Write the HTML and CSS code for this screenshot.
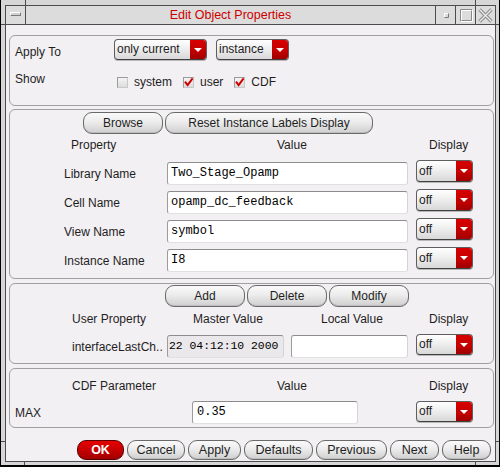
FILE: index.html
```html
<!DOCTYPE html>
<html>
<head>
<meta charset="utf-8">
<title>Edit Object Properties</title>
<link rel="stylesheet" href="styles.css">
</head>
<body>
<div class="window">
  <span class="mark mk-t1"></span><span class="mark mk-t2"></span>
  <span class="mark mk-b1"></span><span class="mark mk-b2"></span>
  <span class="mark mk-l1"></span><span class="mark mk-l2"></span>
  <span class="mark mk-r1"></span><span class="mark mk-r2"></span>
  <div class="frame">
    <div class="titlebar">
      <div class="tb-menu"><span class="dash"></span></div>
      <div class="title">Edit Object Properties</div>
      <div class="tb-btn">
        <svg width="19" height="18" viewBox="0 0 19 18"><path d="M8.5 11.5 V7.5 H12.5" fill="none" stroke="#ffffff"/><path d="M8.5 11.5 H12.5 V7.5" fill="none" stroke="#7a7a7a"/></svg>
      </div>
      <div class="tb-btn">
        <svg width="19" height="18" viewBox="0 0 19 18"><path d="M4.5 15.5 V3.5 H16.5" fill="none" stroke="#8a8a8a"/><path d="M4.5 15.5 H16.5 V3.5" fill="none" stroke="#ffffff"/><path d="M5.5 14.5 V4.5 H15.5" fill="none" stroke="#ffffff"/><path d="M5.5 14.5 H15.5 V4.5" fill="none" stroke="#8a8a8a"/></svg>
      </div>
      <div class="tb-btn">
        <svg width="19" height="18" viewBox="0 0 19 18"><path d="M3.5 3.5 L15.5 15.5 M15.5 3.5 L3.5 15.5" fill="none" stroke="#8c8c8c" stroke-width="3.4"/><path d="M3.5 3.5 L15.5 15.5 M15.5 3.5 L3.5 15.5" fill="none" stroke="#ececec" stroke-width="1.3"/></svg>
      </div>
    </div>

    <div class="client">
      <section class="panel p1">
        <div class="p1-row">
          <span class="lbl1 lbl-apply">Apply To</span>
          <div class="combo c-only"><span class="combo-text">only current</span><span class="combo-arrow"></span></div>
          <div class="combo c-inst"><span class="combo-text">instance</span><span class="combo-arrow"></span></div>
        </div>
        <div class="p1-row p1-show">
          <span class="lbl1">Show</span>
          <div class="checks">
            <span class="cb"></span><span class="cb-text">system</span>
            <span class="cb"><svg width="11" height="11" viewBox="0 0 11 11"><path d="M2 4.6 L4.6 8 L9.6 1.4" fill="none" stroke="#d00000" stroke-width="2"/></svg></span><span class="cb-text">user</span>
            <span class="cb"><svg width="11" height="11" viewBox="0 0 11 11"><path d="M2 4.6 L4.6 8 L9.6 1.4" fill="none" stroke="#d00000" stroke-width="2"/></svg></span><span class="cb-text">CDF</span>
          </div>
        </div>
      </section>

      <section class="panel p2">
        <div class="btn-row br-2">
          <button class="btn w-browse">Browse</button>
          <button class="btn w-reset">Reset Instance Labels Display</button>
        </div>
        <div class="tgrid thead">
          <span class="h-prop">Property</span>
          <span class="h-val">Value</span>
          <span class="h-disp">Display</span>
        </div>
        <div class="rows">
          <div class="tgrid trow">
            <span class="rlbl">Library Name</span>
            <div class="field">Two_Stage_Opamp</div>
            <div class="combo c-off"><span class="combo-text">off</span><span class="combo-arrow"></span></div>
          </div>
          <div class="tgrid trow">
            <span class="rlbl">Cell Name</span>
            <div class="field">opamp_dc_feedback</div>
            <div class="combo c-off"><span class="combo-text">off</span><span class="combo-arrow"></span></div>
          </div>
          <div class="tgrid trow">
            <span class="rlbl">View Name</span>
            <div class="field">symbol</div>
            <div class="combo c-off"><span class="combo-text">off</span><span class="combo-arrow"></span></div>
          </div>
          <div class="tgrid trow">
            <span class="rlbl">Instance Name</span>
            <div class="field">I8</div>
            <div class="combo c-off"><span class="combo-text">off</span><span class="combo-arrow"></span></div>
          </div>
        </div>
      </section>

      <section class="panel p3">
        <div class="btn-row br-3">
          <button class="btn w-80">Add</button>
          <button class="btn w-80">Delete</button>
          <button class="btn w-80">Modify</button>
        </div>
        <div class="ugrid uhead">
          <span class="h-user">User Property</span>
          <span class="h-master">Master Value</span>
          <span class="h-local">Local Value</span>
          <span class="h-disp">Display</span>
        </div>
        <div class="ugrid urow">
          <span class="ulbl">interfaceLastCh..</span>
          <div class="field ro">22 04:12:10 2000</div>
          <div class="field"></div>
          <div class="combo c-off"><span class="combo-text">off</span><span class="combo-arrow"></span></div>
        </div>
      </section>

      <section class="panel p4">
        <div class="cgrid chead">
          <span class="h-cdf">CDF Parameter</span>
          <span class="h-cval">Value</span>
          <span class="h-disp">Display</span>
        </div>
        <div class="cgrid crow">
          <span class="clbl">MAX</span>
          <div class="field">0.35</div>
          <span></span>
          <div class="combo c-off"><span class="combo-text">off</span><span class="combo-arrow"></span></div>
        </div>
      </section>

      <div class="actions">
        <button class="btn ok w-ok">OK</button>
        <button class="btn w-cancel">Cancel</button>
        <button class="btn w-apply">Apply</button>
        <button class="btn w-defaults">Defaults</button>
        <button class="btn w-prev">Previous</button>
        <button class="btn w-next">Next</button>
        <button class="btn w-help">Help</button>
      </div>
    </div>
  </div>
</div>
</body>
</html>
```

FILE: styles.css
```css
* { box-sizing: border-box; }

html, body {
  margin: 0;
  padding: 0;
}

body {
  width: 500px;
  height: 467px;
  overflow: hidden;
  background: #d6d6d6;
  font-family: "Liberation Sans", Arial, sans-serif;
  font-size: 12px;
  line-height: 14px;
  color: #1e1e1e;
}

.window {
  position: relative;
  width: 500px;
  height: 467px;
  background: #d6d6d6;
  border-left: 1px solid #000;
  border-right: 1px solid #000;
  border-bottom: 2px solid #000;
  padding: 5px 3px 3px 4px;
  display: flex;
}

/* resize-corner marks on the window frame */
.mark { position: absolute; background: #4c4c4c; }
.mk-t1 { left: 24px; top: 0; width: 1px; height: 5px; }
.mk-t2 { left: 474px; top: 0; width: 1px; height: 5px; }
.mk-b1 { left: 23px; bottom: 0; width: 1px; height: 4px; }
.mk-b2 { left: 474px; bottom: 0; width: 1px; height: 4px; }
.mk-l1 { left: 0; top: 24px; width: 4px; height: 1px; }
.mk-l2 { left: 0; top: 441px; width: 4px; height: 1px; }
.mk-r1 { right: 0; top: 24px; width: 3px; height: 1px; }
.mk-r2 { right: 0; top: 441px; width: 3px; height: 1px; }

.frame {
  flex: 1;
  border: 1px solid #4c4c4c;
  display: flex;
  flex-direction: column;
  background: #f3f0f3;
}

/* ---------- title bar ---------- */
.titlebar {
  height: 19px;
  flex: none;
  display: flex;
  background: #dcdcdc;
  border-bottom: 1px solid #4c4c4c;
}

.tb-menu {
  width: 20px;
  border-right: 1px solid #4c4c4c;
  display: flex;
  align-items: flex-start;
  padding: 6px 0 0 4px;
}

.dash {
  width: 11px;
  height: 4px;
  background: #d0d0d0;
  border-top: 1px solid #ffffff;
  border-left: 1px solid #ffffff;
  border-bottom: 1px solid #7a7a7a;
  border-right: 1px solid #7a7a7a;
}

.title {
  flex: 1;
  text-align: center;
  color: #cc0000;
  font-size: 12.5px;
  line-height: 18px;
}

.tb-btn {
  width: 20px;
  border-left: 1px solid #4c4c4c;
  display: flex;
}

.tb-btn svg { display: block; }

/* ---------- client ---------- */
.client {
  flex: 1;
  display: flex;
  flex-direction: column;
  padding: 10px 1px 0 3px;
}

.panel {
  border: 1px solid #a29fa2;
  border-radius: 6px;
  flex: none;
}

.p1 { height: 71px; padding: 3px 0 0 5px; }
.p2 { height: 170px; margin-top: 3px; }
.p3 { height: 81px; margin-top: 4px; }
.p4 { height: 60px; margin-top: 4px; }

/* panel 1 */
.p1-row {
  display: flex;
  align-items: center;
  height: 21px;
}

.lbl1 { width: 99px; }
.lbl-apply { padding-top: 4px; }

.p1-show {
  margin-top: 12px;
  height: 14px;
  align-items: flex-start;
}

.checks {
  display: flex;
  align-items: center;
  margin-top: 3px;
  padding-left: 3px;
}

.cb {
  width: 11px;
  height: 11px;
  background: linear-gradient(#f4f4f4, #dcdcdc);
  border: 1px solid #9a9a9a;
  border-right-color: #c8c8c8;
  border-bottom-color: #c8c8c8;
  position: relative;
  display: block;
  margin-top: 1px;
}

.cb svg { position: absolute; left: -1px; top: -1px; }

.cb-text { margin-left: 6px; margin-right: 11px; }

/* combo boxes */
.combo {
  height: 21px;
  display: flex;
  border: 1px solid #5e5e5e;
  border-bottom-color: #404040;
  border-radius: 4px;
  overflow: hidden;
  background: linear-gradient(#ffffff, #f0eff0 45%, #d9d8d9);
  box-shadow: 0 1px 0 #b8b8b8;
}

.combo-text {
  flex: 1;
  padding-left: 2px;
  line-height: 19px;
  white-space: nowrap;
  overflow: hidden;
}

.combo-arrow {
  width: 16px;
  flex: none;
  background: linear-gradient(#d80000, #c00000 60%, #a00000);
  display: flex;
  align-items: center;
  justify-content: center;
}

.combo-arrow::after {
  content: "";
  width: 0;
  height: 0;
  border-left: 4px solid transparent;
  border-right: 4px solid transparent;
  border-top: 4px solid #ffffff;
}

.c-only { width: 93px; }
.c-inst { width: 73px; margin-left: 9px; }
.c-off { width: 57px; height: 22px; }
.c-off .combo-text { line-height: 20px; }

/* buttons */
.btn {
  font-family: "Liberation Sans", Arial, sans-serif;
  font-size: 12px;
  color: #1e1e1e;
  height: 22px;
  padding: 0;
  border: 1px solid #6a6a6a;
  border-radius: 9px;
  background: linear-gradient(#fafafa, #ececec 45%, #cfcfcf);
  box-shadow: inset 0 -1px 0 #bdbdbd;
  line-height: 18px;
  text-align: center;
}

.btn-row { display: flex; gap: 2px; }
.br-2 { margin: 2px 0 0 73px; }
.br-3 { margin: 1px 0 0 155px; }

.w-browse { width: 80px; }
.w-reset { width: 208px; }
.w-80 { width: 80px; }

/* panel 2 table */
.tgrid {
  display: grid;
  grid-template-columns: 103px 249px 57px;
  padding-left: 54px;
}

.tgrid .field { width: 241px; }

.thead { margin-top: 4px; }
.h-prop { padding-left: 7px; }
.h-val { padding-left: 110px; }
.h-disp { padding-left: 13px; white-space: nowrap; }

.rows {
  display: flex;
  flex-direction: column;
  gap: 4px;
  margin-top: 8px;
}

.trow { height: 25px; align-items: start; }
.rlbl { align-self: center; padding-top: 2px; }
.trow .field { margin-top: 2px; }

.field {
  height: 23px;
  background: #ffffff;
  border: 1px solid #8c8c8c;
  border-left-color: #9c9c9c;
  border-right-color: #d4d4d4;
  border-bottom-color: #e0e0e0;
  border-radius: 3px;
  font-family: "Liberation Mono", "Courier New", monospace;
  font-size: 12px;
  line-height: 21px;
  padding-left: 3px;
  white-space: nowrap;
  overflow: hidden;
  color: #000;
}

.field.ro {
  background: #ebe8eb;
  padding-left: 1px;
  font-size: 11.4px;
}

/* panel 3 */
.ugrid {
  display: grid;
  grid-template-columns: 95px 124px 125px 57px;
  padding-left: 62px;
}

.ugrid .field { width: 117px; }

.uhead { margin-top: 5px; }
.h-user { white-space: nowrap; }
.h-master { padding-left: 26px; white-space: nowrap; }
.h-local { padding-left: 30px; white-space: nowrap; }

.urow { margin-top: 8px; align-items: start; height: 25px; }
.ulbl { white-space: nowrap; align-self: center; padding-top: 1px; }
.urow .field { margin-top: 1px; }
.urow .c-off { height: 21px; }
.urow .c-off .combo-text { line-height: 19px; }

/* panel 4 */
.cgrid {
  display: grid;
  grid-template-columns: 177px 166px 58px 57px;
  padding-left: 5px;
}

.chead { margin-top: 10px; }
.h-cdf { padding-left: 57px; white-space: nowrap; }
.h-cval { padding-left: 85px; }
.chead .h-disp { grid-column: 4; }

.crow { margin-top: 8px; align-items: start; height: 23px; }
.clbl { align-self: center; }
.crow .c-off { height: 21px; }
.crow .c-off .combo-text { line-height: 19px; }
.crow .field { padding-left: 4px; }

/* bottom actions */
.actions {
  display: flex;
  gap: 3px;
  margin: 12px 0 0 68px;
}

.actions .btn { height: 20px; line-height: 18px; font-size: 12.5px; }

.btn.ok {
  background: linear-gradient(#e40000, #c80000 50%, #a00000);
  border-color: #5a0000;
  color: #ffffff;
  font-weight: bold;
  box-shadow: none;
}

.w-ok { width: 47px; }
.w-cancel { width: 58px; }
.w-apply { width: 53px; }
.w-defaults { width: 69px; }
.w-prev { width: 71px; }
.w-next { width: 49px; }
.w-help { width: 49px; }
```
